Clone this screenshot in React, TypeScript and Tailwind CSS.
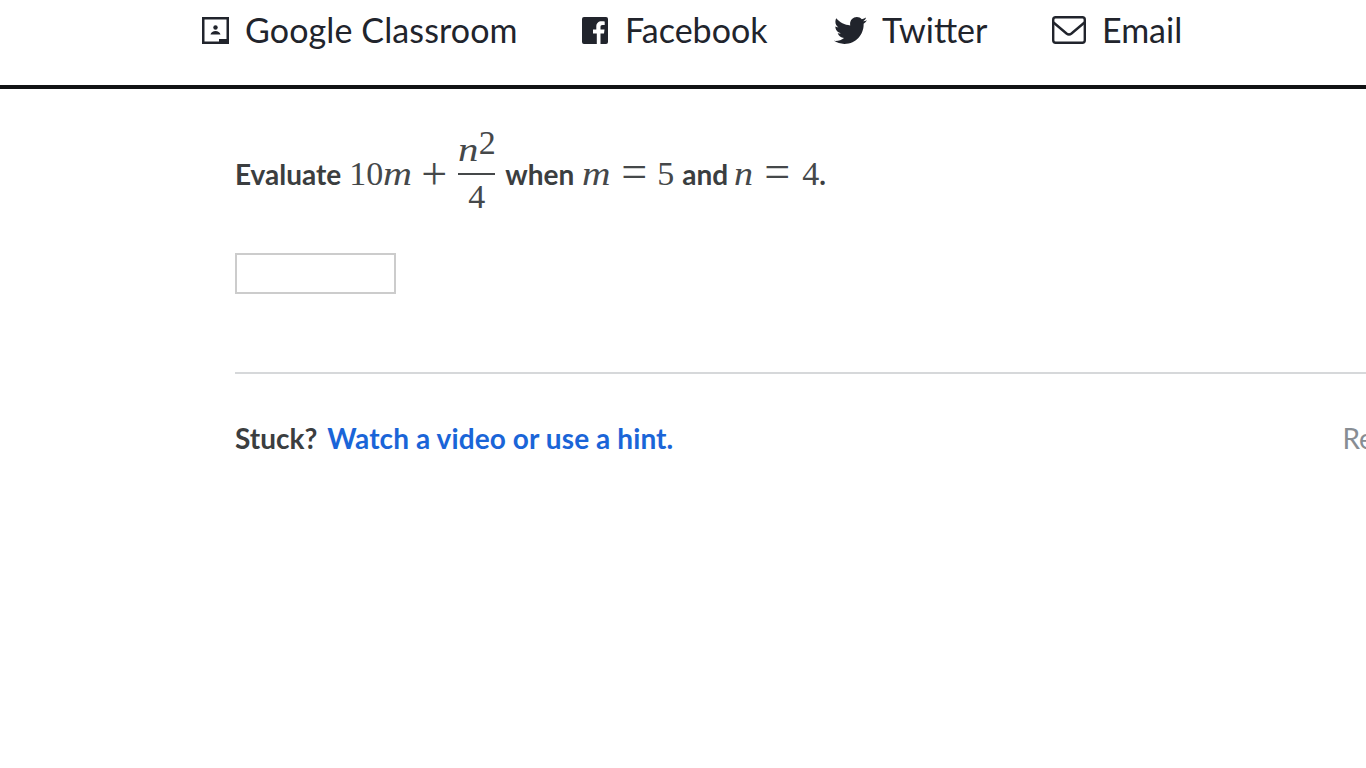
import React from "react";
import { FaTwitter } from "react-icons/fa";

const ClassroomIcon = () => (
  <svg viewBox="0 0 27 27" className="w-[27px] h-[27px]" fill="#21242c">
    <path d="M0 0h27v27H0zM2.500 2.500v22h14.500v-2.500h7.500v2.500h0v-22z" fillRule="evenodd" />
    <circle cx="13.500" cy="10.500" r="2.200" />
    <path d="M8.500 17.500c.5-2.400 2.600-3.600 5-3.600s4.500 1.200 5 3.600z" />
  </svg>
);

const FacebookIcon = () => (
  <svg viewBox="0 0 26 27" className="w-[26px] h-[27px]" fill="#21242c">
    <path
      fillRule="evenodd"
      d="M2 0h22a2 2 0 0 1 2 2v23a2 2 0 0 1-2 2h-5.500V16.500h3.500l.5-4h-4V10c0-1.200.4-2 2-2h2.200V4.400c-.4 0-1.700-.2-3.200-.2-3.100 0-5.200 1.900-5.200 5.400v2.900H11v4h3.800V27H2a2 2 0 0 1-2-2V2a2 2 0 0 1 2-2z"
    />
  </svg>
);

const MailIcon = () => (
  <svg viewBox="0 0 34 28" className="w-[34px] h-[28px]" fill="none" stroke="#21242c" strokeWidth="2.400">
    <rect x="1.200" y="1.200" width="31.600" height="25.600" rx="2.500" />
    <path d="M1.500 6.500 14.500 17.500q2.500 2 5 0L32.500 6.500" />
  </svg>
);

// upright math glyph, sized to the katex-like widths of the picture
const Num = ({ children, className = "" }: { children: React.ReactNode; className?: string }) => (
  <span className={`font-['Liberation_Serif',serif] font-normal text-[34px] text-[#45484a] ${className}`}>{children}</span>
);

const Op = ({ children, className = "" }: { children: React.ReactNode; className?: string }) => (
  <span className={`inline-block font-['Liberation_Serif',serif] font-normal text-[46px] leading-none text-[#45484a] ${className}`}>{children}</span>
);

const Var = ({ children, className = "" }: { children: React.ReactNode; className?: string }) => (
  <span className={`inline-block origin-left font-['Liberation_Serif',serif] italic font-normal text-[34px] leading-none text-[#45484a] ${className}`}>
    {children}
  </span>
);

export default function App() {
  return (
    <div className="w-[1366px] h-[768px] overflow-hidden bg-white font-['Lato',sans-serif]">
      <nav className="h-[89px] border-b-4 border-[#111214] pl-[202px] flex items-start pt-[10px] text-[34px] leading-[40px] text-[#21242c]">
        <a className="flex items-center w-[380px]">
          <ClassroomIcon />
          <span className="ml-4 tracking-[0.12px]">Google Classroom</span>
        </a>
        <a className="flex items-center w-[252px]">
          <FacebookIcon />
          <span className="ml-[17px]">Facebook</span>
        </a>
        <a className="flex items-center w-[218px]">
          <FaTwitter className="w-[33px] h-[33px] text-[#21242c]" />
          <span className="ml-[15px]">Twitter</span>
        </a>
        <a className="flex items-center">
          <MailIcon />
          <span className="ml-4">Email</span>
        </a>
      </nav>

      <main className="pl-[235px]">
        <p className="mt-[40px] h-[90px] leading-[90px] text-[28px] font-bold text-[#3b3e40] whitespace-nowrap">
          <span>Evaluate</span>
          <Num className="ml-2">10</Num>
          <Var className="w-[29px] scale-x-[1.18]">m</Var>
          <Op className="ml-[9px] w-[23px] translate-y-[4px] text-[40px]">+</Op>
          <span className="ml-[14px] inline-flex w-[37px] flex-col items-center align-[24px] leading-none">
            <span className="flex items-baseline">
              <Var className="w-[21px] scale-x-[1.2]">n</Var>
              <Num className="-translate-y-[7px] text-[20px] leading-none">2</Num>
            </span>
            <span className="mt-[6px] h-[2px] w-full bg-[#45484a]" />
            <Num className="mt-[5px] leading-[34px]">4</Num>
          </span>
          <span className="ml-[10px]">when</span>
          <Var className="ml-2 w-[28px] scale-x-[1.16]">m</Var>
          <Op className="ml-[11px] w-[26px] translate-y-[2px]">=</Op>
          <Num className="ml-[10px]">5</Num>
          <span className="ml-2">and</span>
          <Var className="ml-[6px] w-[19px] scale-x-[1.12]">n</Var>
          <Op className="ml-[11px] w-[26px] translate-y-[2px]">=</Op>
          <Num className="ml-3">4</Num>
          <span>.</span>
        </p>

        <input className="block mt-[34px] w-[161px] h-[41px] border-2 border-[#cccccc] bg-white" aria-label="answer" />

        <div className="mt-[78px] w-[1300px] border-t-2 border-[#d6d8da]" />

        <div className="mt-[46px] flex w-max text-[28px] leading-[36px] whitespace-nowrap">
          <div className="font-bold">
            <span className="text-[#3b3e40]">Stuck?</span>
            <a className="ml-[10px] tracking-[0.1px] text-[#1a65d8]">Watch a video or use a hint.</a>
          </div>
          <span className="ml-[669px] text-[#888d93]">Report a problem</span>
        </div>
      </main>
    </div>
  );
}
